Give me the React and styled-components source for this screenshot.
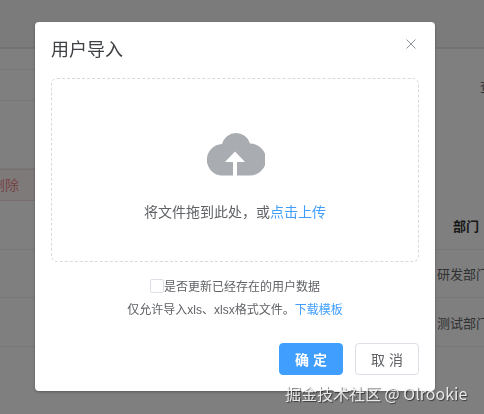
import styled, { createGlobalStyle } from 'styled-components';

const Global = createGlobalStyle`
html, body {
  margin: 0;
  padding: 0;
  background: #fff;
  font-family: "Liberation Sans", "Noto Sans CJK SC", sans-serif;
}
* { box-sizing: border-box; }
`

const Page = styled.div`
width: 484px;
height: 414px;
overflow: hidden;
`

const TopBar = styled.div`
height: 49px;
background: #f6f6f6;
border-bottom: 2px solid #e6e6e6;
`

const Row = styled.div`
display: grid;
grid-template-columns: 437px 1fr;
align-items: center;
height: ${p => p.$height}px;
border-bottom: ${p => p.$short ? '0' : '1px solid #ebeef5'};
background: ${p => p.$short ? 'linear-gradient(#ebeef5, #ebeef5) left bottom / 200px 1px no-repeat' : 'none'};
font-size: 13px;
color: #606266;
white-space: nowrap;
`

const DeleteRow = styled.div`
height: 32px;
width: 200px;
background: #fdf4f4;
border: 1px solid #f5dcdc;
border-left: 0;
color: #ec8a8a;
font-size: 14px;
line-height: 30px;
margin-left: -9px;
`

const Cell = styled.div`
grid-column: 2;
overflow: hidden;
font-weight: ${p => p.$head ? 'bold' : 'normal'};
color: ${p => p.$head ? '#303133' : '#606266'};
padding-left: ${p => p.$pad || 0}px;
`

const Overlay = styled.div`
position: fixed;
inset: 0;
background: rgba(0, 0, 0, .5);
display: flex;
justify-content: center;
align-items: flex-start;
padding: 22px 14px 0 0;
`

const Dialog = styled.div`
width: 400px;
height: 369px;
background: #fff;
border-radius: 4px;
box-shadow: 0 1px 3px rgba(0, 0, 0, .3);
padding: 16px;
display: flex;
flex-direction: column;
`

const DialogHeader = styled.div`
display: flex;
justify-content: space-between;
align-items: flex-start;
height: 40px;
`

const Title = styled.span`
font-size: 18px;
line-height: 24px;
color: #3f4145;
`

const CloseButton = styled.button`
border: 0;
background: none;
padding: 0;
margin: 1px 3px 0 0;
width: 10px;
height: 10px;
display: flex;
cursor: pointer;
`

const DropZone = styled.div`
height: 184px;
border: 1px dashed #d9d9d9;
border-radius: 6px;
display: flex;
flex-direction: column;
align-items: center;
padding-top: 53px;
`

const UploadText = styled.div`
margin-top: 26px;
font-size: 14px;
line-height: 20px;
color: #606266;
`

const Link = styled.a`
color: #409eff;
text-decoration: none;
`

const Tip = styled.div`
display: flex;
flex-direction: column;
align-items: center;
margin-top: 14px;
font-size: 12px;
color: #606266;
`

const CheckLine = styled.label`
display: flex;
align-items: center;
height: 23px;
line-height: 23px;
`

const CheckBox = styled.span`
width: 14px;
height: 14px;
background: #fff;
border: 1px solid #dcdfe6;
border-radius: 2px;
margin-top: -4px;
`

const TipLine = styled.div`
height: 23px;
line-height: 23px;
`

const Footer = styled.div`
display: flex;
justify-content: flex-end;
gap: 12px;
margin-top: 21px;
`

const Button = styled.button`
width: 64px;
height: 32px;
padding: 0;
border-radius: 4px;
font-family: inherit;
font-size: 14px;
font-weight: ${p => p.$primary ? 'bold' : 'normal'};
color: ${p => p.$primary ? '#fff' : '#606266'};
background: ${p => p.$primary ? '#409eff' : '#fff'};
border: 1px solid ${p => p.$primary ? '#409eff' : '#dcdfe6'};
cursor: pointer;
`

const Watermark = styled.div`
position: fixed;
left: 285px;
top: 383px;
font-family: "Noto Sans CJK SC", sans-serif;
font-size: 16px;
line-height: 20px;
white-space: nowrap;
color: rgba(255, 255, 255, .85);
text-shadow: 1px 1px 1px rgba(0, 0, 0, .55);
`

function CloudIcon() {
    return (
        <svg width="59" height="44" viewBox="0 0 59 44">
            <path fill="#a9acb1" d="M15 43.5A15.8 15.8 0 0 1 16 12A14.5 14.5 0 0 1 44 11.5A16 16 0 0 1 44 43.5Z" />
            <path fill="#fff" d="M29 19.5L39 30H31V44H27V30H19Z" />
        </svg>
    )
}

function App() {
    return <>
        <Global />
        <Page>
            <TopBar />
            <Row $short $height={21} />
            <Row $short $height={31}><Cell $pad={43}>查</Cell></Row>
            <Row $short $height={68} />
            <DeleteRow>删除</DeleteRow>
            <Row $height={49}><Cell $head $pad={16}>部门</Cell></Row>
            <Row $height={48}><Cell>研发部门</Cell></Row>
            <Row $height={49}><Cell>测试部门</Cell></Row>
        </Page>

        <Overlay>
            <Dialog>
                <DialogHeader>
                    <Title>用户导入</Title>
                    <CloseButton>
                        <svg width="10" height="10" viewBox="0 0 10 10">
                            <path d="M.5.5l9 9M9.5.5l-9 9" stroke="#909399" fill="none" />
                        </svg>
                    </CloseButton>
                </DialogHeader>

                <DropZone>
                    <CloudIcon />
                    <UploadText>将文件拖到此处，或<Link>点击上传</Link></UploadText>
                </DropZone>

                <Tip>
                    <CheckLine><CheckBox />是否更新已经存在的用户数据</CheckLine>
                    <TipLine>仅允许导入xls、xlsx格式文件。<Link>下载模板</Link></TipLine>
                </Tip>

                <Footer>
                    <Button $primary>确 定</Button>
                    <Button>取 消</Button>
                </Footer>
            </Dialog>
        </Overlay>

        <Watermark>掘金技术社区 @ Olrookie</Watermark>
    </>
}

export default App;
